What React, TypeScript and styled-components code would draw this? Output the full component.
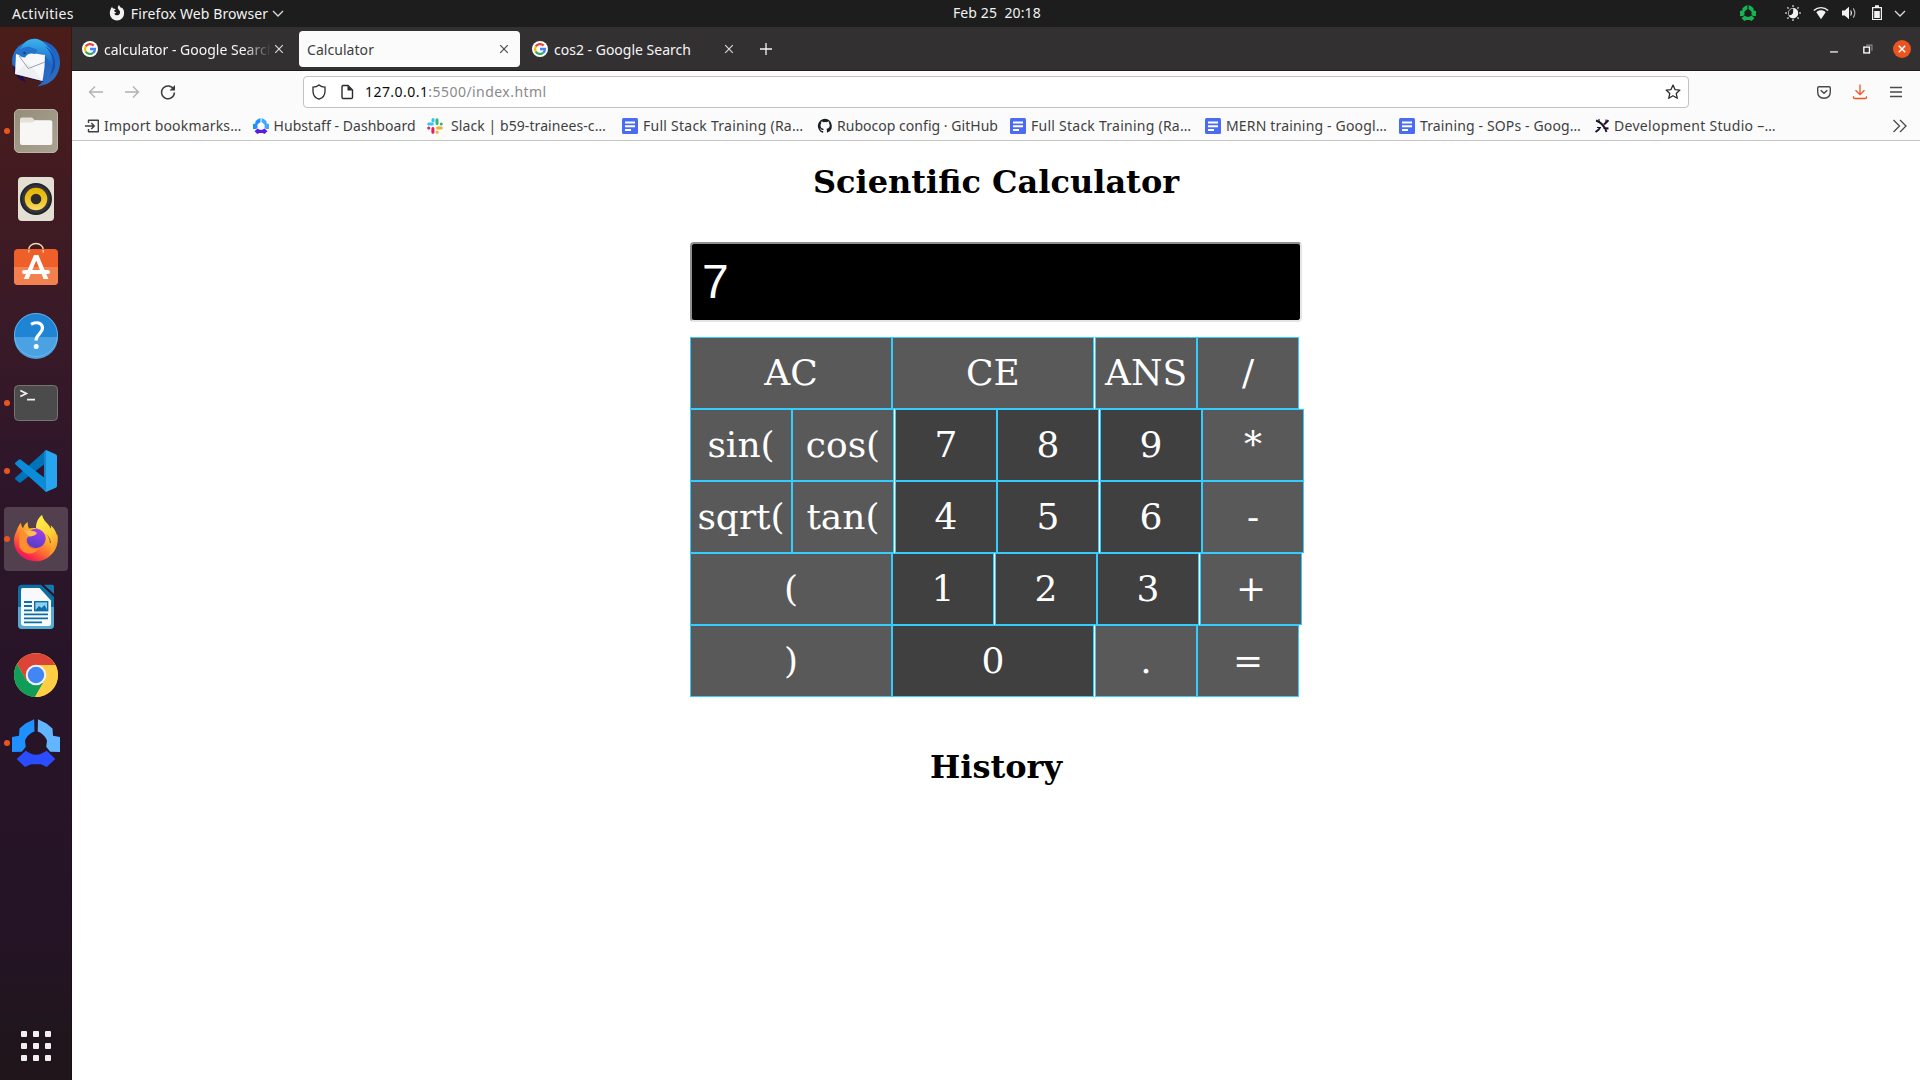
import React from 'react';
import styled, { createGlobalStyle } from 'styled-components';

const UI = '"Noto Sans", "Open Sans", sans-serif';

const GlobalStyle = createGlobalStyle`
  html, body { margin: 0; padding: 0; overflow: hidden; background: #fff; }
  * { box-sizing: border-box; }
  svg { display: block; flex: none; }
`;

const Screen = styled.div`
  display: grid;
  grid-template: 27px 1053px / 72px 1848px;
  width: 1920px;
  height: 1080px;
  font: 14px/20px ${UI};
`;

/* ---------- top panel ---------- */

const TopBar = styled.header`
  grid-column: 1 / -1;
  display: grid;
  grid-template-columns: 941px auto 1fr;
  align-items: center;
  height: 27px;
  padding: 0 12px 1px;
  background: #1d1d1d;
  color: #f2f2f2;
`;
const TopGroup = styled.div<{ $end?: boolean }>`
  display: flex;
  align-items: center;
  justify-content: ${(p) => (p.$end ? 'flex-end' : 'flex-start')};
  gap: ${(p) => (p.$end ? 12 : 0)}px;
`;
const AppMenu = styled.div`
  display: flex;
  align-items: center;
  gap: 6px;
  margin-left: 35px;
`;
const Tray = styled.div`
  margin-right: 17px;
`;
const MenuArrow = styled.div<{ $pull: number }>`
  margin-left: -${(p) => p.$pull}px;
`;
const Label = styled.span<{ $ls?: number }>`
  white-space: pre;
  letter-spacing: ${(p) => p.$ls ?? 0}px;
`;
const TopLabel = styled(Label)`
  padding-top: 1px;
`;

/* ---------- dock ---------- */

const Dock = styled.nav`
  display: flex;
  flex-direction: column;
  gap: 4px;
  padding: 4px 4px 0;
  background: linear-gradient(180deg, #4b1d19 0%, #431b20 13%, #3a1a27 27%, #2f162a 42%, #281428 60%, #251426 85%, #20151c 97%, #1f151a 100%);
  border-right: 1px solid rgba(0, 0, 0, 0.25);
`;
const DockItem = styled.div<{ $active?: boolean }>`
  position: relative;
  width: 64px;
  height: 64px;
  border-radius: 4px;
  background: ${(p) => (p.$active ? '#53404f' : 'transparent')};
`;
const Dot = styled.i`
  position: absolute;
  left: 0;
  top: 29px;
  width: 6px;
  height: 6px;
  border-radius: 50%;
  background: #e95420;
`;
const AppGrid = styled.div`
  display: grid;
  grid-template-columns: repeat(3, 6px);
  gap: 6px;
  margin: auto 0 19px 17px;
`;
const GridDot = styled.i`
  height: 6px;
  border-radius: 1px;
  background: #f2f0ee;
`;

/* ---------- browser chrome ---------- */

const Browser = styled.main`
  display: flex;
  flex-direction: column;
  background: #fff;
`;
const TabStrip = styled.div`
  display: flex;
  align-items: center;
  height: 44px;
  padding: 0 9px 0 4px;
  background: #333031;
  border-bottom: 1px solid #1d1a1b;
  color: #fbfbfb;
`;
const Tab = styled.div<{ $active?: boolean }>`
  display: flex;
  align-items: center;
  width: 221px;
  height: 36px;
  margin-right: ${(p) => (p.$active ? '6px' : '2px')};
  padding: 1px ${(p) => (p.$active ? '8px 0 8px' : '10px 0 6px')};
  border-radius: 4px;
  background: ${(p) => (p.$active ? '#fbfbfb' : 'transparent')};
  color: ${(p) => (p.$active ? '#3d3d3d' : '#f5f5f5')};
`;
const TabTitle = styled.div<{ $fade?: boolean }>`
  flex: 1;
  min-width: 0;
  overflow: hidden;
  padding-top: 1px;
  margin-left: 6px;
  white-space: nowrap;
  ${(p) => p.$fade && 'mask-image: linear-gradient(90deg, #000 84%, transparent 100%);'}
`;
const PlainTitle = styled(TabTitle)`
  margin-left: 0;
`;
const NewTab = styled.div`
  margin-left: 9px;
`;
const WindowControls = styled.div`
  display: flex;
  align-items: center;
  gap: 16px;
  margin-left: auto;
`;
const CloseButton = styled.div`
  display: grid;
  place-items: center;
  width: 18px;
  height: 18px;
  border-radius: 50%;
  background: #e95420;
`;

const NavBar = styled.div`
  display: flex;
  align-items: center;
  height: 40px;
  padding: 0 16px;
  background: #fbfbfb;
  border-top: 1px solid #fff;
`;
const NavButtons = styled.div`
  display: flex;
  gap: 20px;
  width: 215px;
`;
const UrlBar = styled.div`
  display: flex;
  align-items: center;
  width: 1386px;
  height: 32px;
  padding: 0 7px;
  background: #fff;
  border: 1px solid #c2c2c2;
  border-radius: 4px;
`;
const Url = styled.div`
  flex: 1;
  margin-left: 10px;
  color: #8a8a8a;
  letter-spacing: 0.45px;
`;
const Host = styled.span`
  color: #0c0c0d;
`;
const NavTools = styled.div`
  display: flex;
  gap: 20px;
  margin-left: auto;
`;
const PageIcon = styled.div`
  margin-left: 12px;
`;

const Bookmarks = styled.div`
  display: flex;
  align-items: center;
  height: 30px;
  padding: 0 12px;
  background: #fbfbfb;
  border-bottom: 1px solid #c6c6c6;
  color: #3f3f41;
`;
const Bookmark = styled.div<{ $w: number; $gap?: number }>`
  display: flex;
  align-items: center;
  gap: ${(p) => p.$gap ?? 5}px;
  flex: none;
  width: ${(p) => p.$w}px;
`;
const Overflow = styled.div`
  margin-left: auto;
`;

/* ---------- page ---------- */

const Page = styled.section`
  width: 612px;
  margin: 0 auto;
  font-family: "DejaVu Serif", serif;
`;
const Heading = styled.h1<{ $top: number }>`
  margin: ${(p) => p.$top}px 0 0;
  font-size: 32px;
  line-height: 37px;
  font-weight: 700;
  text-align: center;
  color: #000;
  white-space: nowrap;
`;
const Display = styled.div`
  height: 80px;
  margin: 41px 0 15px;
  padding: 0 10px;
  background: #000;
  border: 2px solid;
  border-color: #8f8f8f #e5e5e5 #e5e5e5 #8f8f8f;
  border-radius: 4px;
  color: #fff;
  font: 48px/76px "Liberation Sans", Arial, sans-serif;
`;
const KeyRow = styled.div`
  display: flex;
`;
const Key = styled.button<{ $wide?: boolean; $digit?: boolean; $gap?: boolean }>`
  flex: none;
  width: ${(p) => (p.$wide ? 202 : 102)}px;
  height: 72px;
  margin: 0 0 0 ${(p) => (p.$gap ? 1 : 0)}px;
  padding: 0;
  border: 1px solid #33ccff;
  background: ${(p) => (p.$digit ? '#404040' : '#595959')};
  color: #fff;
  font: 36px/70px "DejaVu Serif", serif;
  white-space: nowrap;
`;

type KeyDef = { t: string; wide?: boolean; digit?: boolean; gap?: boolean };
const keys: KeyDef[][] = [
  [{ t: 'AC', wide: true }, { t: 'CE', wide: true }, { t: 'ANS', gap: true }, { t: '/' }],
  [{ t: 'sin(' }, { t: 'cos(' }, { t: '7', digit: true, gap: true }, { t: '8', digit: true }, { t: '9', digit: true, gap: true }, { t: '*' }],
  [{ t: 'sqrt(' }, { t: 'tan(' }, { t: '4', digit: true, gap: true }, { t: '5', digit: true }, { t: '6', digit: true, gap: true }, { t: '-' }],
  [{ t: '(', wide: true }, { t: '1', digit: true }, { t: '2', digit: true, gap: true }, { t: '3', digit: true }, { t: '+', gap: true }],
  [{ t: ')', wide: true }, { t: '0', wide: true, digit: true }, { t: '.', gap: true }, { t: '=' }],
];

/* ---------- small icons ---------- */

const Icon = ({ s = 16, children }: { s?: number; children: React.ReactNode }) => (
  <svg width={s} height={s} viewBox="0 0 16 16" fill="none">{children}</svg>
);

const Chevron = () => (
  <Icon><path d="M3 6l5 5 5-5" stroke="#dcdcdc" strokeWidth="1.3" /></Icon>
);
const FirefoxMono = () => (
  <Icon>
    <path fill="#f2f2f2" d="M1.6 4.2C2 3 2.700 2.200 3.200 1.700c0 .8.3 1.400.8 1.900 1-.1 2 .1 2.800.6-.6.3-1.300.9-1.800 1.600.3.9.9 1.200 2.300 1.200-.3.9-1.300 1.100-1.900 1.400.4 1.500 2 2.200 3.500 1.800 1.700-.5 2.500-2.200 2-3.800-.4-1.300-1.500-1.700-1.900-2.900C8.600 2.100 9 1 10.200.1c.1 1.500 1.300 2.100 2.300 3.200.2-.2.200-.6.100-1 1.700 1.500 2.600 3.500 2.500 5.700A7.100 7.100 0 0 1 8 15.500 7.200 7.200 0 0 1 .8 8.400c0-1.500.2-2.900.8-4.200z" />
  </Icon>
);
const HubRing = ({ a, b, c, s = 16 }: { a: string; b: string; c: string; s?: number }) => (
  <svg width={s} height={s} viewBox="8 8 48 48">
    <path fill={a} d="M30.200 8.300 30.500 20.500C27 21.600 22 25.300 21 30l.8 5.700-4 5L8 41V26l7-1.300.5-7.200 6-5z" />
    <path fill={b} d="M34 8.300 33.700 20.500C37 21.600 42 25.300 43 30l-.8 5.700 4 5L56 41V26l-7-1.300-.5-7.200-6-5z" />
    <path fill={c} d="M12.700 48 21.700 39.700 26.500 42.500Q32 45 37.500 42.500L42.700 39.700 51.300 48 42.700 56 37 53.300H27L21 56z" />
  </svg>
);
const NightLight = () => (
  <Icon>
    <g stroke="#b5b5b5" strokeWidth="1.500">
      <path d="M8 0v2M8 14v2M0 8h2M14 8h2M2.300 2.300l1.300 1.300M12.400 12.400l1.300 1.300M2.300 13.700l1.300-1.300M12.400 3.600l1.300-1.300" />
    </g>
    <circle cx="8" cy="8" r="4.700" stroke="#b5b5b5" />
    <path fill="#f2f2f2" d="M8.500 3.300A5 5 0 1 1 3.600 10.500 5.200 5.200 0 0 0 8.500 3.300z" />
    <path fill="#f2f2f2" d="M8.300 3.200a5 5 0 0 1 4.600 5L8 9z" />
  </Icon>
);
const Wifi = () => (
  <Icon>
    <path fill="#f2f2f2" d="M3.300 7.200C6 4.700 10 4.700 12.700 7.200L8 14.300z" />
    <path stroke="#f2f2f2" strokeWidth="1.400" d="M.8 5.500C5 1.700 11 1.700 15.200 5.500" />
  </Icon>
);
const Volume = () => (
  <Icon>
    <path fill="#f2f2f2" d="M1 5.500h2.700L8 1.800v12.400l-4.300-3.700H1z" />
    <path stroke="#f2f2f2" strokeWidth="1.200" d="M9.700 5.500q1.500 2.500 0 5" />
    <path stroke="#aaa" strokeWidth="1.200" d="M12.200 3.300q3.200 4.700 0 9.400" />
  </Icon>
);
const Battery = () => (
  <Icon>
    <path stroke="#f2f2f2" strokeWidth="1.200" d="M3.600 2.600h8.800v11.900H3.600z" />
    <path fill="#f2f2f2" d="M6 .3h4v2H6zM5.200 6h5.600v7H5.200z" />
  </Icon>
);
const Google = () => (
  <svg width="16" height="16" viewBox="0 0 16 16">
    <circle cx="8" cy="8" r="8" fill="#fff" />
    <g fill="none" strokeWidth="2.300">
      <path stroke="#ea4335" d="M3.700 5.500A5 5 0 0 1 11.600 4.600" />
      <path stroke="#fbbc05" d="M3.700 5.500a5 5 0 0 0 0 5" />
      <path stroke="#34a853" d="M3.700 10.500a5 5 0 0 0 7.500 1.300" />
      <path stroke="#4285f4" d="M8 8h5A5 5 0 0 1 11.200 11.800" />
    </g>
  </svg>
);
const Cross = ({ color }: { color: string }) => (
  <Icon><path d="M4.200 4.200l7.600 7.600M11.800 4.200l-7.600 7.600" stroke={color} strokeWidth="1.200" /></Icon>
);
const Doc = () => (
  <Icon>
    <rect x="0" y="0" width="16" height="16" rx="1.500" fill="#4a6cf2" />
    <path stroke="#fff" strokeWidth="2" d="M3 4.500h10M3 8.200h10M3 12h6" />
  </Icon>
);
const Slack = () => (
  <svg width="16" height="16" viewBox="0 0 16 16" fill="none" strokeWidth="3" strokeLinecap="round">
    <path stroke="#36c5f0" d="M1.700 5.900h3.600M6 1.600h.1" /><path stroke="#36c5f0" d="M6 2.800v.1" />
    <path stroke="#2eb67d" d="M10 1.700v3.900M14.200 5.900h.1" />
    <path stroke="#ecb22e" d="M10.500 10.100h3.800M10 14.300h.1" />
    <path stroke="#e01e5a" d="M5.900 10.500v3.800M1.700 10.100h.1" />
  </svg>
);
const GitHub = () => (
  <Icon>
    <path fill="#1b1f23" d="M8 .8a7.200 7.200 0 0 0-2.300 14c.4.100.5-.2.500-.4v-1.400c-2 .5-2.400-.9-2.400-.9-.3-.9-.8-1.100-.8-1.100-.7-.5.100-.5.100-.5.700.1 1.100.8 1.100.8.600 1.100 1.700.8 2.100.6.100-.5.300-.8.500-1-1.600-.2-3.300-.8-3.300-3.600 0-.8.300-1.400.7-1.900 0-.2-.3-.9.100-1.900 0 0 .600-.2 2 .7a7 7 0 0 1 3.600 0c1.400-.9 2-.7 2-.7.4 1 .1 1.700.1 1.900.5.500.7 1.100.7 1.900 0 2.800-1.700 3.400-3.300 3.600.3.200.5.700.5 1.300v2c0 .2.100.5.500.4A7.200 7.200 0 0 0 8 .8z" />
  </Icon>
);
const DevStudio = () => (
  <Icon>
    <path stroke="#1d1029" strokeWidth="1.900" d="M2 2.500c4.500 1.500 8.500 5.500 10.500 11.500M1.500 14c1.500-1 3.500-2.500 4.500-4M10 6.500L14.500 2.200M9.500 10l5 .5" />
    <path stroke="#1d1029" strokeWidth="1.200" d="M5 1v4M12 1.500v3.800M3 9.500h4" />
  </Icon>
);
const ImportIcon = () => (
  <Icon>
    <path stroke="#3f3f41" strokeWidth="1.400" strokeLinejoin="round" d="M4.500 5V2.200h9.800v11.600H4.500V11M1 8h9M7.300 5l3 3-3 3" />
  </Icon>
);

/* ---------- dock icons, drawn on a 64x64 tile ---------- */

const Tile = ({ children }: { children: React.ReactNode }) => (
  <svg width="64" height="64" viewBox="0 0 64 64">{children}</svg>
);

const Thunderbird = () => (
  <Tile>
    <defs>
      <linearGradient id="tb" x1="0" y1="0" x2=".8" y2="1"><stop offset="0" stopColor="#2a7fd8" /><stop offset=".5" stopColor="#1c62c4" /><stop offset="1" stopColor="#2f6fc0" /></linearGradient>
      <linearGradient id="tbw" x1="0" y1="0" x2="0" y2="1"><stop offset="0" stopColor="#3bb4ee" /><stop offset="1" stopColor="#1a5fc4" /></linearGradient>
    </defs>
    <path fill="url(#tb)" d="M8.300 34C7 24 12 15 20 12q4-4 11-4.200l-2 1.700C44 8 56 17 56 31c0 10-5 18-13 22l-10 2.800 5-4z" />
    <path fill="#1d0f52" d="M9 36c1 8 6 13 13 15l-3-5 20 5V44z" />
    <path fill="url(#tbw)" d="M16 19c3-8 9-11.500 16-11.200 6 1 9 5 13 9 5 5 6 14 2 20-2-7-4-12-9-14H16z" />
    <path fill="#f7f8fa" d="M12 23L20 25.500Q24 19 31 22.500L41 24 40.500 36 38.600 50 11 43z" />
    <path fill="#e3e6ec" d="M11 43l12-11 5 4 10.600 14z" opacity=".5" />
    <path fill="none" stroke="#9aa0ab" strokeWidth="1" d="M15 25l9.300 12.500L41 31" />
    <path fill="#2273cc" d="M14 22c3-5 7-7 12-6l8 3-3 4c-4-1-7-1-10 3.500-3 0-6-1.500-7-4.500z" />
    <path fill="#1550ae" d="M41 15c8 5 11 13 10 22l-5 9 3-13c0-7-3-13-8-18z" />
    <circle cx="20.500" cy="22" r="1.200" fill="#243f63" />
  </Tile>
);
const Files = () => (
  <Tile>
    <defs><linearGradient id="fl" x1="0" y1="0" x2="1" y2="1"><stop offset="0" stopColor="#958c79" /><stop offset="1" stopColor="#aaa492" /></linearGradient></defs>
    <rect x="10.500" y="10.500" width="43" height="43" rx="4.500" fill="url(#fl)" stroke="#b9b4a5" />
    <path fill="#e4e0d8" d="M16 20.500q0-2 2-2h10l3 3h3v8H16z" />
    <path fill="#f8f7f5" d="M16 25q0-1.500 1.500-1.500h11l3-2.200h15q1.800 0 1.800 1.800v21q0 2-2 2H18q-2 0-2-2z" />
  </Tile>
);
const Rhythmbox = () => (
  <Tile>
    <defs><linearGradient id="rb" x1="0" y1="0" x2="0" y2="1"><stop offset="0" stopColor="#e5b400" /><stop offset=".6" stopColor="#efc62a" /><stop offset="1" stopColor="#fadb68" /></linearGradient></defs>
    <rect x="14" y="10" width="36" height="44" rx="4" fill="#e3dfd3" />
    <circle cx="32" cy="32" r="15" fill="#33353a" stroke="#23252b" strokeWidth="2" />
    <circle cx="32" cy="32" r="11.300" fill="url(#rb)" />
    <circle cx="32" cy="32" r="5.300" fill="#2c2c2c" />
  </Tile>
);
const Software = () => (
  <Tile>
    <path fill="none" stroke="#f3d9ac" strokeWidth="1.500" d="M24.800 16v-1.500a7.200 6 0 0 1 14.400 0V16" />
    <rect x="10" y="14" width="44" height="36" rx="4" fill="#ee5f2a" />
    <path fill="#f3814f" d="M10 32h44v14q0 4-4 4H14q-4 0-4-4z" />
    <path fill="#fff" fillRule="evenodd" d="M30 20h4.400l10 24h-4.800l-7.400-18.500L24.600 44h-4.800z" />
    <rect x="18" y="35" width="28" height="4" rx="2" fill="#fff" />
    <path fill="none" stroke="#f3d9ac" strokeWidth="1.500" d="M24.800 15v2.500M39.200 15v2.500" />
  </Tile>
);
const Help = () => (
  <Tile>
    <circle cx="32" cy="32" r="22" fill="#1f84d4" />
    <path fill="#4aa2e2" d="M10 34a22 22 0 0 0 44 0z" />
    <circle cx="32" cy="32" r="21.500" fill="none" stroke="#73b8ea" strokeWidth=".8" />
    <path fill="none" stroke="#fff" strokeWidth="3.200" d="M27 21.300c5-3 11.500-1.500 11.500 3.800 0 5.500-6.500 6-6.500 12.400" />
    <circle cx="32.200" cy="43.500" r="2.500" fill="#fff" />
  </Tile>
);
const Terminal = () => (
  <Tile>
    <rect x="10.500" y="14.500" width="43" height="35" rx="4" fill="#4b4b4b" stroke="#747474" />
    <path fill="none" stroke="#f0f0f0" strokeWidth="1.800" d="M16.300 19.500l6 3-6 3M23 28.700h8" />
  </Tile>
);
const VSCode = () => (
  <Tile>
    <path fill="#0072b8" d="M11.500 38.500q-1.200 1 0 2l3.200 2.800q1 .8 2.200 0L42 24V11z" />
    <path fill="#0a8cd8" d="M11.500 25.500q-1.200-1 0-2l3.200-2.800q1-.8 2.200 0L42 40v13z" />
    <path fill="#27a5ee" d="M42 11l9.700 4.200q1.300.6 1.300 2v29.600q0 1.400-1.300 2L42 53z" />
    <path fill="#1685cb" d="M42 11v42l-2-1.500V12.500z" />
  </Tile>
);
const Firefox = () => (
  <Tile>
    <defs>
      <linearGradient id="ff" x1=".85" y1=".1" x2=".2" y2="1"><stop offset="0" stopColor="#fff44f" /><stop offset=".3" stopColor="#ffb52a" /><stop offset=".6" stopColor="#ff6a35" /><stop offset=".85" stopColor="#f7214f" /><stop offset="1" stopColor="#d9127f" /></linearGradient>
      <linearGradient id="ffg" x1=".7" y1="0" x2=".3" y2="1"><stop offset="0" stopColor="#a23ef0" /><stop offset="1" stopColor="#4f3fc4" /></linearGradient>
      <linearGradient id="fft" x1="0" y1="0" x2=".5" y2="1"><stop offset="0" stopColor="#fff24a" /><stop offset=".6" stopColor="#ffd338" /><stop offset="1" stopColor="#ff9b2b" /></linearGradient>
    </defs>
    <path fill="url(#ff)" d="M12.500 24c1-3 2.500-6 4.500-8.200.2 2.500.9 4.200 2 5.500 1-3 2.500-4.800 4.800-6.300-.3 3 .3 4.500 1.200 6.500 4-1 8-.5 11 1 6 2 10 8 10 14l7.300-9c2 12-6 26.800-21.300 26.800C19.500 54.300 10 45 10 33.500c0-3.500 1-6.500 2.500-9.500z" />
    <path fill="url(#fft)" d="M32 21c0-6 2.500-10.500 6-13 1 4.500 4 7 7 10.500l2 3.300q.4-2-.3-3.500c5 4.500 7.300 10 6.800 17-.8 6-4 11-8 13 2-6 2.500-12 0-17-2-4-6-7-13.500-10.300z" />
    <circle cx="32" cy="31.500" r="9.700" fill="url(#ffg)" />
    <path fill="#ff8f2e" d="M15 27c5-4 11-4 17-1.500-1 2.500-3 3-6 3.800-3 .8-4 3-3.500 6 1.500 6 7.500 8 13 5.500-5 8-16 7.500-20-.5z" />
    <path fill="#ffbd4f" d="M20 23.500c5-.5 11 .5 13 2.500-1 2.500-4 3-6.500 3.500-3-1-5-3.300-6.500-6z" />
  </Tile>
);
const Writer = () => (
  <Tile>
    <path fill="#0b6fa4" d="M18 9.700h19L50 22v28q0 4-4 4H18q-4 0-4-4V13.700q0-4 4-4z" />
    <path fill="#55aad4" d="M14 32h36v18q0 4-4 4H18q-4 0-4-4z" />
    <path fill="#f8f9fa" d="M18.500 13h17L47 25.500v23q0 2.500-2.500 2.500h-24q-3.500 0-3.500-3V16q0-3 1.500-3z" />
    <path fill="#1579ae" d="M40 9.700h8.500q1.500 0 1.500 1.500V19z" />
    <path stroke="#0d6fa6" strokeWidth="1.800" d="M20 27h8M20 31h8M20 35.300h8M20 39.300h24M20 43.300h24M20 47.300h18" />
    <rect x="30.700" y="26.700" width="13" height="9" fill="#8fd0ee" stroke="#0d6fa6" strokeWidth="1.400" />
    <path fill="#0d6fa6" d="M31 35.500l4-4.500 2.500 2 3-3 3 5.500z" />
  </Tile>
);
const Chrome = () => (
  <Tile>
    <circle cx="32" cy="32" r="22" fill="#ffce44" />
    <path fill="#db4437" d="M13 21A22 22 0 0 1 51.300 22H32L22.500 37.500z" />
    <path fill="#0f9d58" d="M13 21A22 22 0 0 0 31 54L40.500 37.500 32 40 22.500 37.500z" />
    <path fill="#ffce44" d="M31 54l9.500-16.500L42 22h9.500A22 22 0 0 1 31 54z" />
    <circle cx="32" cy="32" r="10.300" fill="#f1f1f1" />
    <circle cx="32" cy="32" r="8.200" fill="#4285f4" />
  </Tile>
);
const Hubstaff = () => (
  <Tile>
    <svg x="8" y="8" width="48" height="48"><HubRing s={48} a="#1e90ff" b="#62b6ff" c="#2a4dff" /></svg>
  </Tile>
);

const dock: { icon: React.ReactNode; running?: boolean; active?: boolean }[] = [
  { icon: <Thunderbird /> },
  { icon: <Files />, running: true },
  { icon: <Rhythmbox /> },
  { icon: <Software /> },
  { icon: <Help /> },
  { icon: <Terminal />, running: true },
  { icon: <VSCode />, running: true },
  { icon: <Firefox />, running: true, active: true },
  { icon: <Writer /> },
  { icon: <Chrome /> },
  { icon: <Hubstaff />, running: true },
];

const bookmarks: { icon: React.ReactNode; t: string; w: number; ls?: number; gap?: number }[] = [
  { icon: <ImportIcon />, t: 'Import bookmarks…', w: 168.5, ls: 0.18, gap: 4 },
  { icon: <HubRing a="#1e90ff" b="#3fa9ff" c="#5a1be8" />, t: 'Hubstaff - Dashboard', w: 174.5, ls: 0.05 },
  { icon: <Slack />, t: 'Slack | b59-trainees-c…', w: 195, ls: 0.08, gap: 8 },
  { icon: <Doc />, t: 'Full Stack Training (Ra…', w: 195, ls: 0.25 },
  { icon: <GitHub />, t: 'Rubocop config · GitHub', w: 193, ls: 0.03, gap: 4 },
  { icon: <Doc />, t: 'Full Stack Training (Ra…', w: 195, ls: 0.25 },
  { icon: <Doc />, t: 'MERN training - Googl…', w: 194, ls: 0.17 },
  { icon: <Doc />, t: 'Training - SOPs - Goog…', w: 195, ls: 0.14 },
  { icon: <DevStudio />, t: 'Development Studio –…', w: 190, ls: 0.3, gap: 4 },
];

export default function App() {
  return (
    <>
      <GlobalStyle />
      <Screen>
        <TopBar>
          <TopGroup>
            <TopLabel $ls={0.35}>Activities</TopLabel>
            <AppMenu>
              <FirefoxMono />
              <TopLabel $ls={0.1}>Firefox Web Browser</TopLabel>
              <MenuArrow $pull={4}><Chevron /></MenuArrow>
            </AppMenu>
          </TopGroup>
          <Label $ls={0.1}>Feb 25  20:18</Label>
          <TopGroup $end>
            <Tray><HubRing a="#16b455" b="#16b455" c="#16b455" /></Tray>
            <NightLight />
            <Wifi />
            <Volume />
            <Battery />
            <MenuArrow $pull={5}><Chevron /></MenuArrow>
          </TopGroup>
        </TopBar>

        <Dock>
          {dock.map((d, i) => (
            <DockItem key={i} $active={d.active}>
              {d.icon}
              {d.running && <Dot />}
            </DockItem>
          ))}
          <AppGrid>
            {Array.from({ length: 9 }, (_, i) => <GridDot key={i} />)}
          </AppGrid>
        </Dock>

        <Browser>
          <TabStrip>
            <Tab>
              <Google />
              <TabTitle $fade><Label>calculator - Google Search</Label></TabTitle>
              <Cross color="#d8d8d8" />
            </Tab>
            <Tab $active>
              <PlainTitle><Label $ls={0.05}>Calculator</Label></PlainTitle>
              <Cross color="#4a4a4a" />
            </Tab>
            <Tab>
              <Google />
              <TabTitle><Label>cos2 - Google Search</Label></TabTitle>
              <Cross color="#d8d8d8" />
            </Tab>
            <NewTab>
              <Icon><path d="M8 2v12M2 8h12" stroke="#f5f5f5" strokeWidth="1.300" /></Icon>
            </NewTab>
            <WindowControls>
              <Icon s={18}><path d="M4.500 10.600h7" stroke="#fff" strokeWidth="1.100" /></Icon>
              <Icon s={18}>
                <path d="M6.500 4.500h5v5" stroke="#8f8d8e" />
                <rect x="4.300" y="6.300" width="5" height="5.200" stroke="#fff" strokeWidth="1.200" />
              </Icon>
              <CloseButton>
                <Icon><path d="M4.800 4.800l6.400 6.400M11.200 4.800l-6.400 6.400" stroke="#fff" strokeWidth="1.500" /></Icon>
              </CloseButton>
            </WindowControls>
          </TabStrip>

          <NavBar>
            <NavButtons>
              <Icon><path d="M15 8H1.500M7 2.500L1.500 8 7 13.500" stroke="#b1b1b2" strokeWidth="1.300" /></Icon>
              <Icon><path d="M1 8h13.500M9 2.500L14.500 8 9 13.500" stroke="#b1b1b2" strokeWidth="1.300" /></Icon>
              <Icon>
                <path d="M13.700 5.500A6.400 6.400 0 1 0 14.400 8.500" stroke="#3b3b3d" strokeWidth="1.500" />
                <path d="M15 1v5.500H9.500z" fill="#3b3b3d" />
              </Icon>
            </NavButtons>
            <UrlBar>
              <Icon><path d="M8 .9C6.300 2.300 4 3 2 3.100v4.100c0 3.700 2.200 6.600 6 8 3.800-1.400 6-4.300 6-8V3.100C12 3 9.700 2.300 8 .9z" stroke="#2b2b2d" strokeWidth="1.300" /></Icon>
              <PageIcon>
                <Icon>
                  <path d="M3 2.800q0-1.300 1.300-1.300H9l4.500 4.500v7.200q0 1.300-1.300 1.300H4.300Q3 14.500 3 13.200z" stroke="#2b2b2d" strokeWidth="1.400" />
                  <path d="M8.500 1.500v5h5z" fill="#2b2b2d" />
                </Icon>
              </PageIcon>
              <Url><Host>127.0.0.1</Host>:5500/index.html</Url>
              <Icon><path d="M8 1.100l2 4.500 4.900.5-3.700 3.300 1.100 4.900L8 11.800l-4.300 2.500 1.100-4.900L1.100 6.100 6 5.600z" stroke="#2b2b2d" strokeWidth="1.300" strokeLinejoin="round" /></Icon>
            </UrlBar>
            <NavTools>
              <Icon>
                <path d="M1.700 4q0-1.300 1.300-1.300h10q1.300 0 1.300 1.300v4q0 6-6.300 6.200Q1.700 14 1.700 8z" stroke="#4a4a4c" strokeWidth="1.400" />
                <path d="M4.700 6.200L8 9.300l3.300-3.100" stroke="#4a4a4c" strokeWidth="1.500" />
              </Icon>
              <Icon>
                <path d="M8 .5v10M3.500 6.200L8 10.700l4.500-4.500M1.500 12.300v1q0 1.200 1.200 1.200h10.600q1.200 0 1.200-1.200v-1" stroke="#e95420" strokeWidth="1.300" />
              </Icon>
              <Icon><path d="M2 3.500h12M2 8h12M2 12.500h12" stroke="#4a4a4c" strokeWidth="1.300" /></Icon>
            </NavTools>
          </NavBar>

          <Bookmarks>
            {bookmarks.map((b, i) => (
              <Bookmark key={i} $w={b.w} $gap={b.gap}>
                {b.icon}
                <Label $ls={b.ls}>{b.t}</Label>
              </Bookmark>
            ))}
            <Overflow>
              <Icon><path d="M1.500 2l6 6-6 6M8 2l6 6-6 6" stroke="#4a4a4c" strokeWidth="1.300" /></Icon>
            </Overflow>
          </Bookmarks>

          <Page>
            <Heading $top={23}>Scientific Calculator</Heading>
            <Display>7</Display>
            {keys.map((row, r) => (
              <KeyRow key={r}>
                {row.map((k) => (
                  <Key key={k.t} $wide={k.wide} $digit={k.digit} $gap={k.gap}>{k.t}</Key>
                ))}
              </KeyRow>
            ))}
            <Heading $top={52}>History</Heading>
          </Page>
        </Browser>
      </Screen>
    </>
  );
}
